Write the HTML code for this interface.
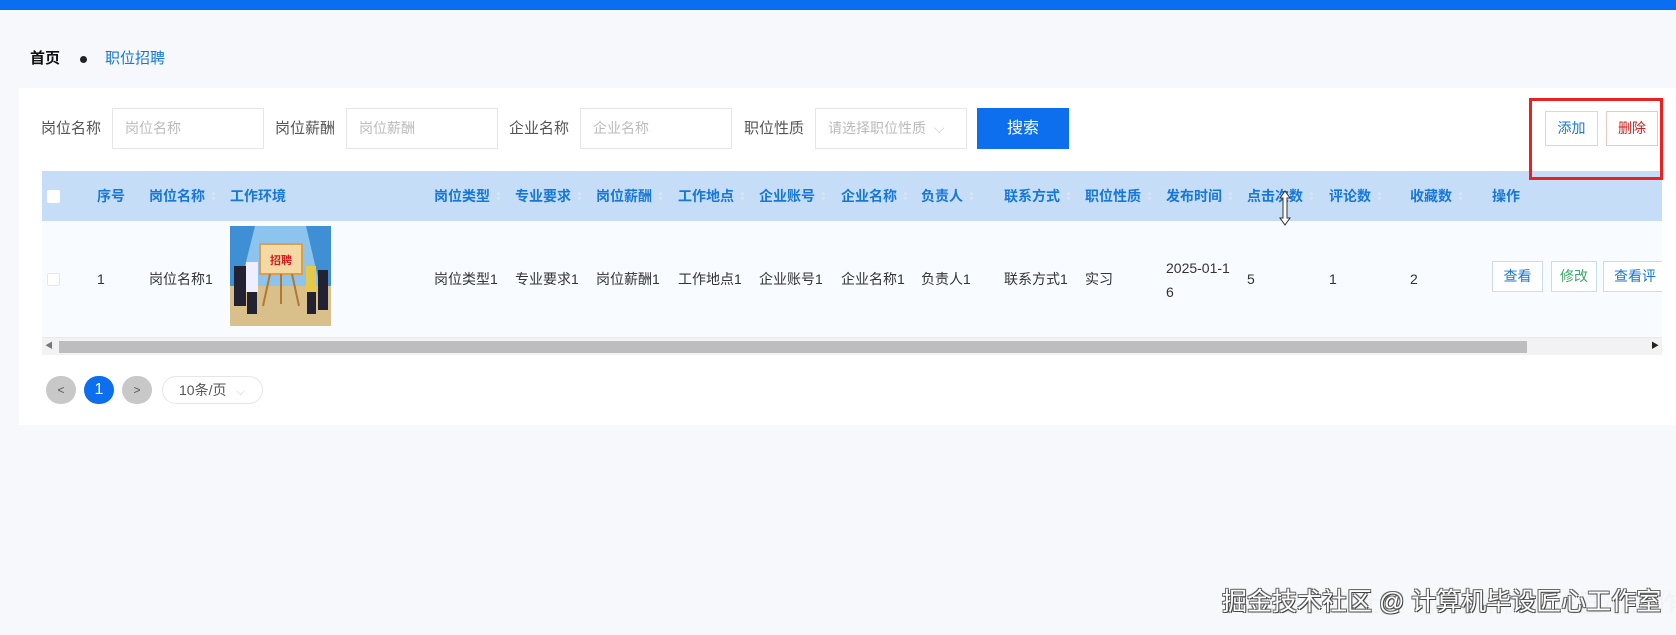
<!DOCTYPE html>
<html><head><meta charset="utf-8"><style>
*{margin:0;padding:0;box-sizing:border-box}
body{width:1676px;height:635px;background:#f6f8fc;font-family:"Liberation Sans","Noto Sans CJK SC",sans-serif;position:relative;overflow:hidden;color:#333;font-size:14px}
.a{position:absolute;white-space:nowrap}
.inp{position:absolute;top:108px;height:41px;border:1px solid #e4e6ea;background:#fff;color:#bbb;font-size:14px;line-height:39px;padding-left:12px}
.lab{position:absolute;top:108px;line-height:41px;color:#555;font-size:15px}
.h{position:absolute;top:171px;line-height:50px;color:#1677d8;font-weight:bold;font-size:14px}
.c{position:absolute;top:221px;line-height:117px;color:#333;font-size:14px}
.s{display:inline-block;width:6px;margin-left:5px;vertical-align:middle;color:#d8e4f2;font-size:7px;line-height:6px}
.btn{position:absolute;border:1px solid #c9dcec;background:#fff;text-align:center;font-size:14px}
</style></head><body>
<div class="a" style="left:0;top:0;width:1676px;height:10px;background:#0a6ef0"></div>
<div class="a" style="left:30px;top:47px;font-weight:bold;font-size:15px;color:#111;line-height:24px">首页</div>
<div class="a" style="left:80px;top:56px;width:7px;height:7px;border-radius:50%;background:#222"></div>
<div class="a" style="left:105px;top:47px;font-size:15px;color:#1677d8;line-height:24px">职位招聘</div>
<div class="a" style="left:19px;top:88px;width:1657px;height:337px;background:#fff"></div>

<div class="lab" style="left:41px">岗位名称</div><div class="inp" style="left:112px;width:152px">岗位名称</div>
<div class="lab" style="left:275px">岗位薪酬</div><div class="inp" style="left:346px;width:152px">岗位薪酬</div>
<div class="lab" style="left:509px">企业名称</div><div class="inp" style="left:580px;width:152px">企业名称</div>
<div class="lab" style="left:744px">职位性质</div><div class="inp" style="left:815px;width:152px">请选择职位性质 <span style="color:#ccc;margin-left:4px">⌵</span></div>
<div class="a" style="left:977px;top:108px;width:92px;height:41px;background:#0d6fee;color:#fff;text-align:center;line-height:41px;font-size:16px">搜索</div>

<div class="btn" style="left:1545px;top:111px;width:53px;height:35px;line-height:33px;color:#1677d8">添加</div>
<div class="btn" style="left:1606px;top:111px;width:52px;height:35px;line-height:33px;color:#d02020;border-color:#e8c8c8">删除</div>

<div class="a" style="left:42px;top:171px;width:1620px;height:50px;background:#c5ddf7"></div>
<div class="a" style="left:1529px;top:98px;width:134px;height:82px;border:3px solid #ec2020;z-index:5"></div>
<div class="a" style="left:42px;top:221px;width:1620px;height:117px;background:#f8fbff;border-bottom:1px solid #e6eaf0"></div>
<div class="a" style="left:47px;top:190px;width:13px;height:13px;background:#fff;border-radius:2px"></div>
<div class="a" style="left:47px;top:273px;width:13px;height:13px;background:#fff;border:1px solid #e4e8ee;border-radius:2px"></div>

<div class="h" style="left:97px">序号</div>
<div class="h" style="left:149px">岗位名称<span class="s">▲<br>▼</span></div>
<div class="h" style="left:230px">工作环境</div>
<div class="h" style="left:434px">岗位类型<span class="s">▲<br>▼</span></div>
<div class="h" style="left:515px">专业要求<span class="s">▲<br>▼</span></div>
<div class="h" style="left:596px">岗位薪酬<span class="s">▲<br>▼</span></div>
<div class="h" style="left:678px">工作地点<span class="s">▲<br>▼</span></div>
<div class="h" style="left:759px">企业账号<span class="s">▲<br>▼</span></div>
<div class="h" style="left:841px">企业名称<span class="s">▲<br>▼</span></div>
<div class="h" style="left:921px">负责人<span class="s">▲<br>▼</span></div>
<div class="h" style="left:1004px">联系方式<span class="s">▲<br>▼</span></div>
<div class="h" style="left:1085px">职位性质<span class="s">▲<br>▼</span></div>
<div class="h" style="left:1166px">发布时间<span class="s">▲<br>▼</span></div>
<div class="h" style="left:1247px">点击次数<span class="s">▲<br>▼</span></div>
<div class="h" style="left:1329px">评论数<span class="s">▲<br>▼</span></div>
<div class="h" style="left:1410px">收藏数<span class="s">▲<br>▼</span></div>
<div class="h" style="left:1492px">操作</div>
<svg class="a" style="left:1278px;top:190px" width="14" height="36" viewBox="0 0 14 36"><path d="M7 1 L12 8 H9 V28 H12 L7 35 L2 28 H5 V8 H2 Z" fill="#fff" stroke="#333" stroke-width="1"/></svg>

<div class="c" style="left:97px">1</div>
<div class="c" style="left:149px">岗位名称1</div>
<svg class="a" style="left:230px;top:226px" width="101" height="100" viewBox="0 0 101 100">
<rect width="101" height="100" fill="#3f8fd4"/><polygon points="25,0 76,0 90,60 10,60" fill="#8cc4ee"/>
<rect x="0" y="60" width="101" height="40" fill="#d9c08a"/>
<rect x="30" y="18" width="42" height="30" fill="#f4d9a4" stroke="#d9a050" stroke-width="2"/>
<text x="51" y="38" font-size="11" font-weight="bold" fill="#d02020" text-anchor="middle" font-family="Noto Sans CJK SC,sans-serif">招聘</text>
<path d="M40 48 L33 80 M62 48 L69 80 M51 48 V78" stroke="#b07830" stroke-width="2"/>
<rect x="4" y="40" width="12" height="40" fill="#223"/><rect x="16" y="36" width="12" height="30" fill="#eef"/><rect x="17" y="66" width="10" height="22" fill="#223"/>
<rect x="76" y="40" width="10" height="26" fill="#e6c84a"/><rect x="77" y="66" width="9" height="22" fill="#223"/><rect x="88" y="44" width="10" height="40" fill="#223"/>
</svg>
<div class="c" style="left:434px">岗位类型1</div>
<div class="c" style="left:515px">专业要求1</div>
<div class="c" style="left:596px">岗位薪酬1</div>
<div class="c" style="left:678px">工作地点1</div>
<div class="c" style="left:759px">企业账号1</div>
<div class="c" style="left:841px">企业名称1</div>
<div class="c" style="left:921px">负责人1</div>
<div class="c" style="left:1004px">联系方式1</div>
<div class="c" style="left:1085px">实习</div>
<div class="a" style="left:1166px;top:256px;line-height:24px">2025-01-1<br>6</div>
<div class="c" style="left:1247px">5</div>
<div class="c" style="left:1329px">1</div>
<div class="c" style="left:1410px">2</div>
<div class="btn" style="left:1492px;top:261px;width:51px;height:31px;line-height:29px;color:#1677d8">查看</div>
<div class="btn" style="left:1551px;top:261px;width:46px;height:31px;line-height:29px;color:#3aaa6a">修改</div>
<div class="btn" style="left:1603px;top:261px;width:59px;height:31px;line-height:29px;color:#1677d8;overflow:hidden;text-align:left;padding-left:10px;border-right:none">查看评论</div>

<div class="a" style="left:42px;top:338px;width:1620px;height:17px;background:#f2f2f2"></div>
<div class="a" style="left:59px;top:341px;width:1468px;height:12px;background:#bdbdbd"></div>
<div class="a" style="left:45px;top:340px;font-size:8px;color:#777">◀</div>
<div class="a" style="left:1651px;top:340px;font-size:8px;color:#222">▶</div>

<div class="a" style="left:46px;top:376px;width:30px;height:28px;border-radius:14px;background:#c8c8c8;color:#555;text-align:center;line-height:28px;font-size:12px">&lt;</div>
<div class="a" style="left:84px;top:376px;width:30px;height:28px;border-radius:14px;background:#0d6fee;color:#fff;text-align:center;line-height:28px;font-size:16px">1</div>
<div class="a" style="left:122px;top:376px;width:30px;height:28px;border-radius:14px;background:#c8c8c8;color:#555;text-align:center;line-height:28px;font-size:12px">&gt;</div>
<div class="a" style="left:162px;top:376px;width:101px;height:28px;border-radius:14px;border:1px solid #e6e6e6;color:#555;line-height:26px;padding-left:16px;font-size:14px">10条/页 <span style="color:#ccc;font-size:11px;margin-left:6px">⌵</span></div>

<div class="a" style="left:1250px;top:588px;font-size:25px;color:#eee;opacity:0.5;line-height:32px;letter-spacing:1px">掘金技术社区 @ 计算机毕设匠心工作室</div>
<div class="a" style="left:1222px;top:586px;font-size:25px;color:#fff;line-height:32px;text-shadow:1px 1px 0 #444,-1px -1px 0 #666,1px -1px 0 #666,-1px 1px 0 #666">掘金技术社区 @ 计算机毕设匠心工作室</div>
</body></html>
